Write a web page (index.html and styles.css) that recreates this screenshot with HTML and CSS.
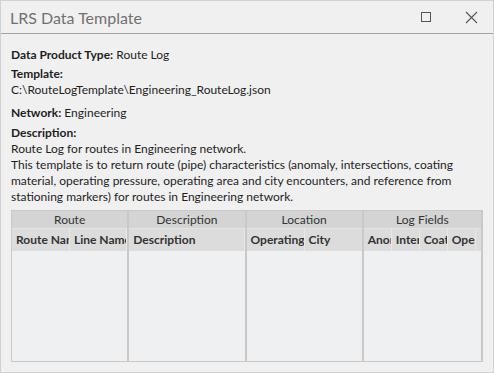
FILE: index.html
```html
<!DOCTYPE html>
<html lang="en">
<head>
  <meta charset="UTF-8" />
  <title>LRS Data Template</title>
  <link rel="stylesheet" href="styles.css">
</head>
<body>
  <div class="window">
    <div class="titlebar">
      <span class="title">LRS Data Template</span>
      <div class="controls">
        <svg width="12" height="12" viewBox="0 0 12 12"><rect x="1.5" y="1.5" width="9" height="9" fill="none" stroke="#555" stroke-width="1"/></svg>
        <svg width="13" height="13" viewBox="0 0 13 13"><path d="M1 1 L12 12 M12 1 L1 12" stroke="#555" stroke-width="1.1" fill="none"/></svg>
      </div>
    </div>

    <div class="content">
      <div class="field type"><b>Data Product Type:</b> Route Log</div>
      <div class="field path">
        <b>Template:</b><br>
        C:\RouteLogTemplate\Engineering_RouteLog.json
      </div>
      <div class="field network"><b>Network:</b> Engineering</div>
      <div class="field desc">
        <b>Description:</b><br>
        Route Log for routes in Engineering network.<br>
        This template is to return route (pipe) characteristics (anomaly, intersections, coating material, operating pressure, operating area and city encounters, and reference from stationing markers) for routes in Engineering network.
      </div>

      <div class="grid">
        <div class="group">
          <div class="group-head">Route</div>
          <div class="cols">
            <div class="col w57">Route Name</div>
            <div class="col">Line Name</div>
          </div>
          <div class="rows"></div>
        </div>
        <div class="group">
          <div class="group-head">Description</div>
          <div class="cols">
            <div class="col">Description</div>
          </div>
          <div class="rows"></div>
        </div>
        <div class="group">
          <div class="group-head">Location</div>
          <div class="cols">
            <div class="col w57">Operating Area</div>
            <div class="col w57">City</div>
          </div>
          <div class="rows"></div>
        </div>
        <div class="group last">
          <div class="group-head">Log Fields</div>
          <div class="cols">
            <div class="col w28">Anomaly</div>
            <div class="col w28">Intersections</div>
            <div class="col w28">Coating</div>
            <div class="col w28">Operating Pressure</div>
          </div>
          <div class="rows"></div>
        </div>
      </div>
    </div>
  </div>
</body>
</html>
```

FILE: styles.css
```css
html, body {
  margin: 0;
  padding: 0;
}
body {
  font-family: Lato, "Open Sans", sans-serif;
  font-size: 12px;
  color: #1e1e1e;
  background: #f0f0f0;
}
.window {
  width: 494px;
  height: 373px;
  box-sizing: border-box;
  border: 1px solid #d2d2d2;
  background: #f0f0f1;
  display: flex;
  flex-direction: column;
}
.titlebar {
  height: 32px;
  border-bottom: 1px solid #a3a3a3;
  display: flex;
  align-items: center;
  justify-content: space-between;
  padding: 0 0 0 9px;
  background: #f0f0f0;
}
.title {
  font-size: 16px;
  color: #707070;
}
.controls {
  display: flex;
  align-items: center;
  gap: 33px;
  padding-right: 15px;
}
.content {
  padding: 13px 10px 10px 10px;
  flex: 1;
  display: flex;
  flex-direction: column;
}
.field {
  line-height: 16px;
}
.field.type {
  margin-bottom: 3px;
}
.field.path {
  margin-bottom: 7px;
}
.field.network {
  margin-bottom: 4px;
}
.field.desc {
  margin-bottom: 5px;
}
.field b {
  font-weight: bold;
}
.grid {
  flex: 1;
  display: grid;
  grid-template-columns: repeat(4, 1fr);
  border: 1px solid #c9c9c9;
  border-right: 2px solid #c9c9c9;
}
.group {
  display: flex;
  flex-direction: column;
  border-right: 2px solid #c9c9c9;
  overflow: hidden;
}
.group.last {
  border-right: none;
}
.group-head {
  height: 17px;
  line-height: 17px;
  text-align: center;
  background: #d4d4d4;
  color: #333;
}
.cols {
  height: 22px;
  display: flex;
  background: #dcdcdc;
  border-top: 1px solid #e4e4e4;
}
.col {
  flex: 1;
  font-weight: bold;
  color: #333;
  line-height: 22px;
  padding-left: 4px;
  white-space: nowrap;
  overflow: hidden;
  border-right: 1px solid #e8e8e8;
}
.col.w57 {
  flex: 0 0 53px;
}
.col.w28 {
  flex: 0 0 23px;
}
.rows {
  flex: 1;
  background: #eff0f2;
}
```
